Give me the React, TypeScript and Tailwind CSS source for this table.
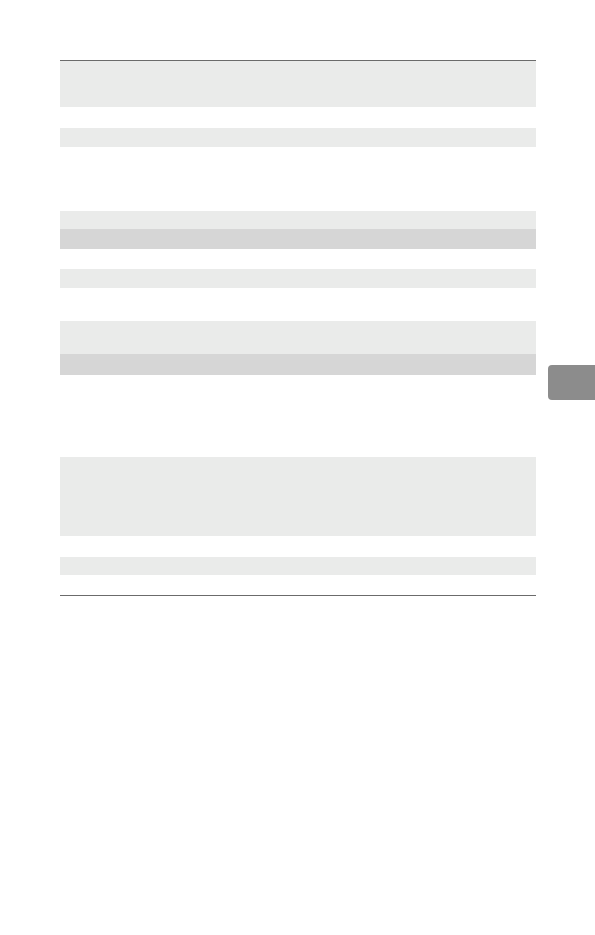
import React from 'react';

const rows: { h: string; tone: 'light' | 'dark' | 'none' }[] = [
  { h: 'h-[46px]', tone: 'light' },
  { h: 'h-[21px]', tone: 'none' },
  { h: 'h-[19px]', tone: 'light' },
  { h: 'h-[64px]', tone: 'none' },
  { h: 'h-[18px]', tone: 'light' },
  { h: 'h-[20px]', tone: 'dark' },
  { h: 'h-[20px]', tone: 'none' },
  { h: 'h-[19px]', tone: 'light' },
  { h: 'h-[33px]', tone: 'none' },
  { h: 'h-[33px]', tone: 'light' },
  { h: 'h-[21px]', tone: 'dark' },
  { h: 'h-[82px]', tone: 'none' },
  { h: 'h-[79px]', tone: 'light' },
  { h: 'h-[21px]', tone: 'none' },
  { h: 'h-[18px]', tone: 'light' },
  { h: 'h-[20px]', tone: 'none' },
];

const toneClass = {
  light: 'bg-[#eaebea]',
  dark: 'bg-[#d6d6d6]',
  none: 'bg-white',
};

export default function App() {
  return (
    <div className="relative min-h-[935px] w-[595px] bg-white font-['Liberation_Sans',sans-serif]">
      <div className="pt-[60px] pl-[60px]">
        <div className="w-[476px] border-t border-b border-[#6b6b6b]">
          {rows.map((r, i) => (
            <div key={i} className={`${r.h} ${toneClass[r.tone]}`} />
          ))}
        </div>
      </div>

      {/* thumb index tab */}
      <div className="absolute left-[548px] top-[365px] h-[35px] w-[47px] rounded-l-[4px] bg-[#8c8c8c]" />
    </div>
  );
}
